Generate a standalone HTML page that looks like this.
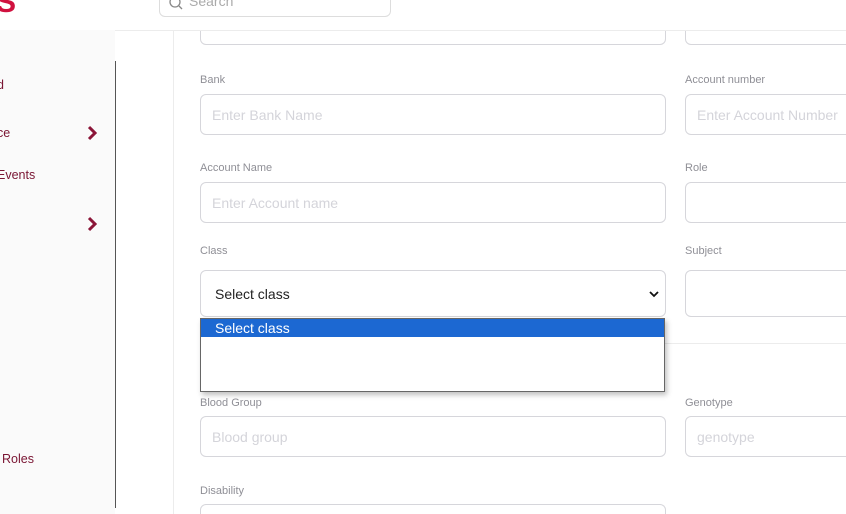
<!DOCTYPE html>
<html><head><style>
html,body{margin:0;width:846px;height:514px;overflow:hidden}
body{background:#fff;font-family:"Liberation Sans",Arial,sans-serif}
#w{position:relative;width:846px;height:514px;overflow:hidden}
.abs{position:absolute}
.lbl{position:absolute;font-size:11px;color:#8f8f96}
.inp{position:absolute;height:39px;border:1px solid #d6d6db;border-radius:6px;box-sizing:border-box;font-size:14px;color:#d4d4da;padding-left:11px;line-height:39px;background:#fff}
.nav{position:absolute;font-size:12.5px;color:#7a1533}
</style></head><body><div id="w">
<div class="abs" style="left:0;top:30px;width:115px;height:484px;background:#fafafa"></div>
<div class="abs" style="left:115px;top:61px;width:1px;height:447px;background:#555"></div>
<div class="abs" style="left:173px;top:31px;width:1px;height:483px;background:#ececec"></div>
<div class="inp" style="left:200px;top:-5px;width:466px;height:50px"></div>
<div class="inp" style="left:685px;top:-5px;width:200px;height:50px"></div>
<div class="abs" style="left:0;top:0;width:846px;height:30px;background:#fff;z-index:2"></div>
<div class="abs" style="left:115px;top:30px;width:731px;height:1px;background:#ececec;z-index:2"></div>
<div class="abs" style="left:-4px;top:-14px;font-size:30px;font-weight:bold;color:#d0113f;z-index:3">S</div>
<div class="abs" style="left:159px;top:-20px;width:232px;height:37px;border:1px solid #ddd;border-radius:6px;box-sizing:border-box;font-size:14px;color:#aaa;padding-left:29px;line-height:40px;z-index:3">Search
<svg style="position:absolute;left:9px;top:15px" width="14" height="14" viewBox="0 0 14 14"><circle cx="6" cy="6" r="5" fill="none" stroke="#888" stroke-width="1.3"/><path d="M10 10l3 3" stroke="#888" stroke-width="1.3"/></svg></div>
<div class="nav" style="left:-3px;top:78px">d</div>
<div class="nav" style="left:-3px;top:126px">ce</div>
<div class="nav" style="left:-3px;top:168px">Events</div>
<div class="nav" style="left:2px;top:452px">Roles</div>
<svg class="abs" style="left:87px;top:125px" width="12" height="16" viewBox="0 0 12 16"><path d="M2 2l6 6-6 6" fill="none" stroke="#8b1538" stroke-width="3"/></svg>
<svg class="abs" style="left:87px;top:216px" width="12" height="16" viewBox="0 0 12 16"><path d="M2 2l6 6-6 6" fill="none" stroke="#8b1538" stroke-width="3"/></svg>
<div class="lbl" style="left:200px;top:74px">Bank</div>
<div class="lbl" style="left:685px;top:74px">Account number</div>
<div class="inp" style="left:200px;top:94px;width:466px;height:41px;line-height:41px">Enter Bank Name</div>
<div class="inp" style="left:685px;top:94px;width:200px;height:41px;line-height:41px">Enter Account Number</div>
<div class="lbl" style="left:200px;top:162px">Account Name</div>
<div class="lbl" style="left:685px;top:162px">Role</div>
<div class="inp" style="left:200px;top:182px;width:466px;height:41px;line-height:41px">Enter Account name</div>
<div class="inp" style="left:685px;top:182px;width:200px;height:41px"></div>
<div class="lbl" style="left:200px;top:245px">Class</div>
<div class="lbl" style="left:685px;top:245px">Subject</div>
<div class="inp" style="left:200px;top:270px;width:466px;height:47px;line-height:47px;color:#222;padding-left:14px">Select class
<svg style="position:absolute;right:6px;top:20px" width="10" height="7" viewBox="0 0 10 7"><path d="M1 1l4 4 4-4" fill="none" stroke="#111" stroke-width="1.8"/></svg></div>
<div class="inp" style="left:685px;top:270px;width:200px;height:47px"></div>
<div class="abs" style="left:665px;top:343px;width:181px;height:1px;background:#ececec"></div>
<div class="abs" style="left:200px;top:318px;width:465px;height:74px;border:1px solid #666;box-sizing:border-box;background:#fff;box-shadow:2px 3px 5px rgba(0,0,0,.25)">
<div style="height:18px;background:#1c68d2;color:#fff;font-size:14px;line-height:18px;padding-left:14px">Select class</div></div>
<div class="lbl" style="left:200px;top:397px">Blood Group</div>
<div class="lbl" style="left:685px;top:397px">Genotype</div>
<div class="inp" style="left:200px;top:416px;width:466px;height:41px;line-height:41px">Blood group</div>
<div class="inp" style="left:685px;top:416px;width:200px;height:41px;line-height:41px">genotype</div>
<div class="lbl" style="left:200px;top:485px">Disability</div>
<div class="inp" style="left:200px;top:504px;width:466px;height:10px;border-bottom:none;border-radius:6px 6px 0 0"></div>
</div></body></html>
